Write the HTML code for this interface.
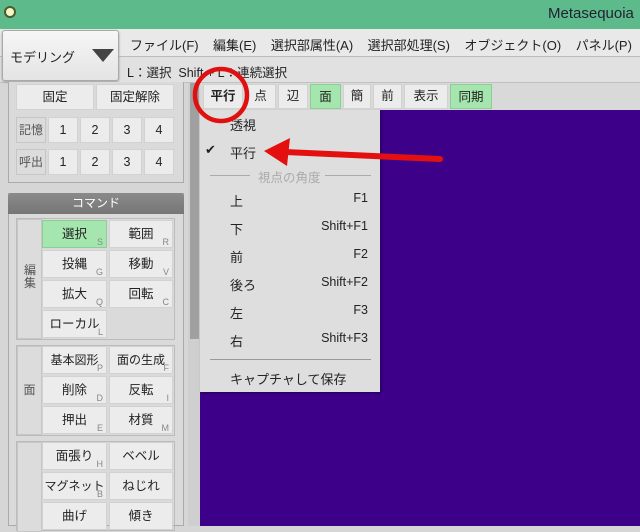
<!DOCTYPE html><html><head><meta charset="utf-8"><style>
*{margin:0;padding:0;box-sizing:border-box}
body{width:640px;height:526px;overflow:hidden;position:relative;background:#d6d6d6;font-family:"Liberation Sans","Noto Sans CJK JP",sans-serif;font-size:12px;color:#222}
.a{position:absolute}
.b{position:absolute;background:#ececec;border:1px solid #d2d2d2;text-align:center;font-size:12.5px;color:#222}
.g{background:#a4e6ae;border-color:#8ccf96}
.s{position:absolute;right:3px;bottom:-1px;font-size:9px;line-height:12px;color:#888}
.lab{position:absolute;background:#dcdcdc;border:1px solid #c6c6c6;text-align:center;color:#555}
.mi{position:absolute;left:30px;font-size:13px;color:#222}
.mk{position:absolute;right:12px;font-size:12.5px;color:#222}
</style></head><body>
<div class="a" style="left:0;top:0;width:640px;height:29px;background:#5dbb8b"></div>
<div class="a" style="left:4px;top:6px;width:12px;height:12px;border-radius:50%;background:#f3f7c8;border:2px solid #4c5a2a"></div>
<div class="a" style="left:548px;top:5px;font-size:15px;color:#223">Metasequoia</div>
<div class="a" style="left:0;top:29px;width:640px;height:28px;background:#e9e9e9;border-bottom:1px solid #bbb"></div>
<div class="a" style="left:0;top:57px;width:640px;height:26px;background:#e1e1e1;border-bottom:1px solid #c0c0c0"></div>
<div class="a" style="left:130px;top:35px;font-size:13px;white-space:nowrap;color:#222">ファイル(F)&nbsp;&nbsp;&nbsp;&nbsp;編集(E)&nbsp;&nbsp;&nbsp;&nbsp;選択部属性(A)&nbsp;&nbsp;&nbsp;&nbsp;選択部処理(S)&nbsp;&nbsp;&nbsp;&nbsp;オブジェクト(O)&nbsp;&nbsp;&nbsp;&nbsp;パネル(P)</div>
<div class="a" style="left:127px;top:62px;font-size:12.5px;white-space:nowrap">L：選択&nbsp; Shift + L：連続選択</div>
<div class="a" style="left:2px;top:30px;width:117px;height:51px;background:linear-gradient(#f6f6f6,#e4e4e4);border:1px solid #aaa;border-radius:3px;box-shadow:0 1px 2px #999"></div>
<div class="a" style="left:10px;top:47px;font-size:13px">モデリング</div>
<div class="a" style="left:92px;top:49px;width:0;height:0;border-left:11px solid transparent;border-right:11px solid transparent;border-top:13px solid #444"></div>
<div class="a" style="left:8px;top:82px;width:176px;height:101px;border:1px solid #aaa;border-top:none;background:#dadada"></div>
<div class="b" style="left:16px;top:84px;width:78px;height:26px;line-height:24px">固定</div>
<div class="b" style="left:96px;top:84px;width:78px;height:26px;line-height:24px">固定解除</div>
<div class="lab" style="left:16px;top:117px;width:30px;height:26px;line-height:24px">記憶</div>
<div class="b" style="left:48px;top:117px;width:30px;height:26px;line-height:24px">1</div>
<div class="b" style="left:80px;top:117px;width:30px;height:26px;line-height:24px">2</div>
<div class="b" style="left:112px;top:117px;width:30px;height:26px;line-height:24px">3</div>
<div class="b" style="left:144px;top:117px;width:30px;height:26px;line-height:24px">4</div>
<div class="lab" style="left:16px;top:149px;width:30px;height:26px;line-height:24px">呼出</div>
<div class="b" style="left:48px;top:149px;width:30px;height:26px;line-height:24px">1</div>
<div class="b" style="left:80px;top:149px;width:30px;height:26px;line-height:24px">2</div>
<div class="b" style="left:112px;top:149px;width:30px;height:26px;line-height:24px">3</div>
<div class="b" style="left:144px;top:149px;width:30px;height:26px;line-height:24px">4</div>
<div class="a" style="left:8px;top:193px;width:176px;height:333px;border:1px solid #aaa;background:#dadada"></div>
<div class="a" style="left:8px;top:193px;width:176px;height:21px;background:linear-gradient(#8a8a8a,#767676);color:#fff;text-align:center;line-height:20px;border-radius:3px 3px 0 0">コマンド</div>
<div class="a" style="left:16px;top:218px;width:159px;height:122px;border:1px solid #bbb"></div>
<div class="lab" style="left:17px;top:219px;width:25px;height:120px"><div style="position:absolute;left:6px;top:44px;width:12px;line-height:13px;font-size:12px">編<br>集</div></div>
<div class="b g" style="left:42px;top:220px;width:65px;height:28px;line-height:26px">選択<span class="s">S</span></div>
<div class="b" style="left:109px;top:220px;width:64px;height:28px;line-height:26px">範囲<span class="s">R</span></div>
<div class="b" style="left:42px;top:250px;width:65px;height:28px;line-height:26px">投縄<span class="s">G</span></div>
<div class="b" style="left:109px;top:250px;width:64px;height:28px;line-height:26px">移動<span class="s">V</span></div>
<div class="b" style="left:42px;top:280px;width:65px;height:28px;line-height:26px">拡大<span class="s">Q</span></div>
<div class="b" style="left:109px;top:280px;width:64px;height:28px;line-height:26px">回転<span class="s">C</span></div>
<div class="b" style="left:42px;top:310px;width:65px;height:28px;line-height:26px">ローカル<span class="s">L</span></div>
<div class="a" style="left:16px;top:345px;width:159px;height:91px;border:1px solid #bbb"></div>
<div class="lab" style="left:17px;top:346px;width:25px;height:89px;line-height:87px">面</div>
<div class="b" style="left:42px;top:346px;width:65px;height:28px;line-height:26px;font-size:12px">基本図形<span class="s">P</span></div>
<div class="b" style="left:109px;top:346px;width:64px;height:28px;line-height:26px;font-size:12px">面の生成<span class="s">F</span></div>
<div class="b" style="left:42px;top:376px;width:65px;height:28px;line-height:26px">削除<span class="s">D</span></div>
<div class="b" style="left:109px;top:376px;width:64px;height:28px;line-height:26px">反転<span class="s">I</span></div>
<div class="b" style="left:42px;top:406px;width:65px;height:28px;line-height:26px">押出<span class="s">E</span></div>
<div class="b" style="left:109px;top:406px;width:64px;height:28px;line-height:26px">材質<span class="s">M</span></div>
<div class="a" style="left:16px;top:441px;width:159px;height:90px;border:1px solid #bbb"></div>
<div class="lab" style="left:17px;top:442px;width:25px;height:90px"></div>
<div class="b" style="left:42px;top:442px;width:65px;height:28px;line-height:26px">面張り<span class="s">H</span></div>
<div class="b" style="left:109px;top:442px;width:64px;height:28px;line-height:26px">ベベル</div>
<div class="b" style="left:42px;top:472px;width:65px;height:28px;line-height:26px;font-size:12px">マグネット<span class="s">B</span></div>
<div class="b" style="left:109px;top:472px;width:64px;height:28px;line-height:26px">ねじれ</div>
<div class="b" style="left:42px;top:502px;width:65px;height:28px;line-height:26px">曲げ</div>
<div class="b" style="left:109px;top:502px;width:64px;height:28px;line-height:26px">傾き</div>
<div class="a" style="left:188px;top:83px;width:12px;height:443px;background:#cfcfcf"></div>
<div class="a" style="left:190px;top:83px;width:9px;height:256px;background:#a0a0a0"></div>
<div class="a" style="left:200px;top:83px;width:440px;height:443px;background:#d9d9d9"></div>
<div class="a" style="left:200px;top:110px;width:440px;height:416px;background:#3c0089"></div>
<div class="b" style="left:203px;top:84px;width:40px;height:25px;line-height:23px;font-weight:bold">平行</div>
<div class="b" style="left:245px;top:84px;width:31px;height:25px;line-height:23px">点</div>
<div class="b" style="left:278px;top:84px;width:30px;height:25px;line-height:23px">辺</div>
<div class="b g" style="left:310px;top:84px;width:31px;height:25px;line-height:25px">面</div>
<div class="b" style="left:343px;top:84px;width:28px;height:25px;line-height:23px">簡</div>
<div class="b" style="left:373px;top:84px;width:29px;height:25px;line-height:23px">前</div>
<div class="b" style="left:404px;top:84px;width:44px;height:25px;line-height:23px">表示</div>
<div class="b g" style="left:450px;top:84px;width:42px;height:25px;line-height:25px">同期</div>
<div class="a" style="left:200px;top:110px;width:180px;height:282px;background:#dedede;box-shadow:1px 1px 2px rgba(0,0,0,.4)">
<div class="mi" style="top:5px">透視</div>
<div class="a" style="left:5px;top:32px;font-size:13px">✔</div>
<div class="mi" style="top:33px">平行</div>
<div class="a" style="left:10px;top:65px;width:40px;border-top:1px solid #aaa"></div>
<div class="a" style="left:58px;top:57px;color:#aaa;font-size:12.5px">視点の角度</div>
<div class="a" style="left:125px;top:65px;width:46px;border-top:1px solid #aaa"></div>
<div class="mi" style="top:81px">上</div><div class="mk" style="top:81px">F1</div>
<div class="mi" style="top:109px">下</div><div class="mk" style="top:109px">Shift+F1</div>
<div class="mi" style="top:137px">前</div><div class="mk" style="top:137px">F2</div>
<div class="mi" style="top:165px">後ろ</div><div class="mk" style="top:165px">Shift+F2</div>
<div class="mi" style="top:193px">左</div><div class="mk" style="top:193px">F3</div>
<div class="mi" style="top:221px">右</div><div class="mk" style="top:221px">Shift+F3</div>
<div class="a" style="left:10px;top:249px;width:161px;border-top:1px solid #999"></div>
<div class="mi" style="top:259px">キャプチャして保存</div>
</div>
<svg class="a" style="left:0;top:0" width="640" height="526">
<circle cx="221" cy="95" r="26" fill="none" stroke="#e01010" stroke-width="4.5"/>
<path d="M440 159 L285 152" stroke="#e41010" stroke-width="6" stroke-linecap="round"/>
<path d="M264 151 L290 138 L287 166 Z" fill="#e41010"/>
</svg>
</body></html>
